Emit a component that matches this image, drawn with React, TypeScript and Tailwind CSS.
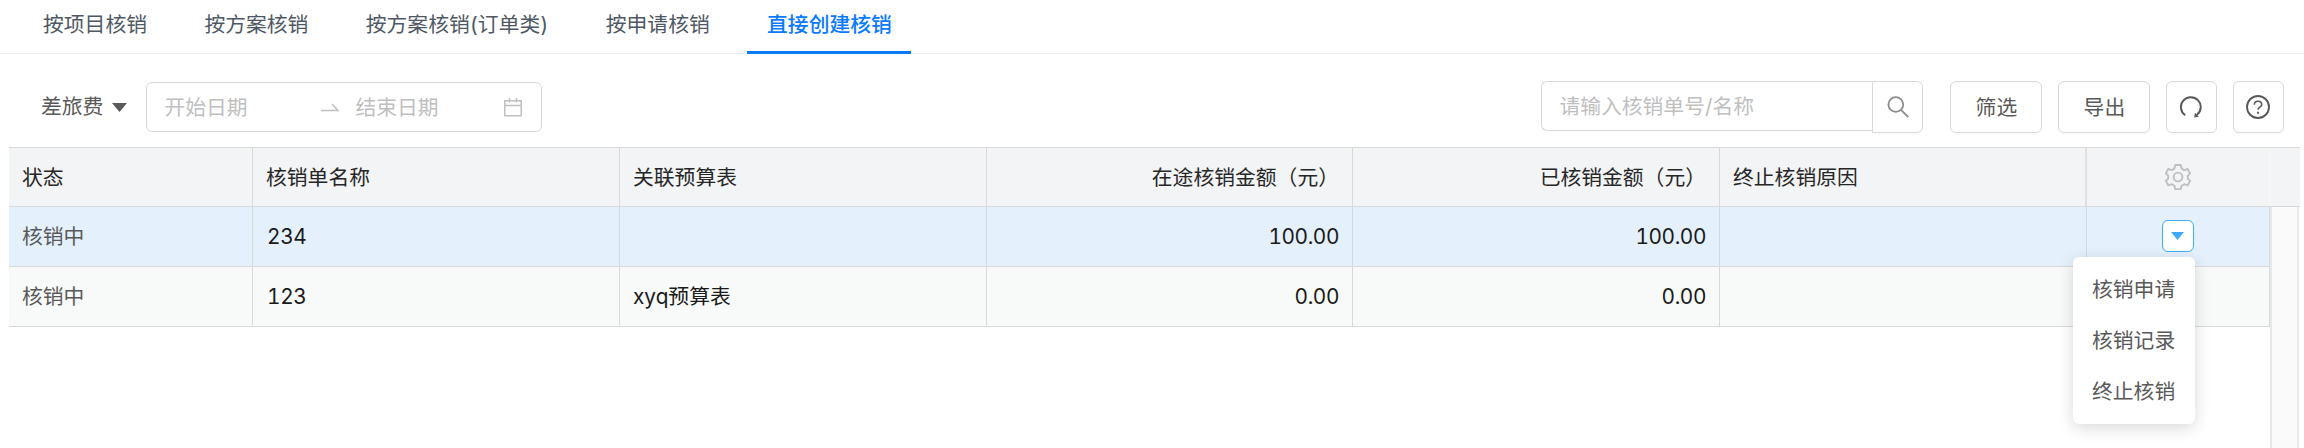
import React from "react";

const tabs = ["按项目核销", "按方案核销", "按方案核销(订单类)", "按申请核销"];
const columns = [
  { title: "核销单名称", right: false },
  { title: "关联预算表", right: false },
  { title: "在途核销金额（元）", right: true },
  { title: "已核销金额（元）", right: true },
  { title: "终止核销原因", right: false },
];
const rows = [
  ["234", "", "100.00", "100.00", ""],
  ["123", "xyq预算表", "0.00", "0.00", ""],
];
const grid = "grid grid-cols-[244px_367px_367px_366px_367px_367px_183px]";
const button =
  "flex h-[52px] items-center justify-center rounded-md border border-[#d9d9d9] bg-white text-[#595959] shadow-[0_2px_0_rgba(0,0,0,0.02)]";

function Calendar() {
  return (
    <svg width="18" height="19" viewBox="0 0 18 19" fill="none" stroke="#bfbfbf" strokeWidth="1.5">
      <path d="M.8 2.8h16.4v15H.8zM.8 7.5h16.4M5.5 0v4.5M12.5 0v4.5" />
    </svg>
  );
}

function Search() {
  return (
    <svg width="22" height="22" viewBox="0 0 22 22" fill="none" stroke="#8c8c8c" strokeWidth="1.8">
      <circle cx="8.8" cy="8.5" r="7.4" />
      <path d="M14 13.8l7.2 7.2" />
    </svg>
  );
}

function Reload() {
  return (
    <svg className="mr-[2px]" width="22" height="22" viewBox="0 0 22 22" fill="none" stroke="#595959" strokeWidth="2">
      <path d="M5.2 19.2A9.9 9.9 0 1 1 17 18.8" />
      <path d="M15 16.8l4 3.9-4.8 .8z" fill="#595959" stroke="none" />
    </svg>
  );
}

function Help() {
  return (
    <svg className="mr-[2px] mb-px" width="24" height="24" viewBox="0 0 24 24" fill="none" stroke="#595959" strokeWidth="1.9">
      <circle cx="12" cy="12" r="11" />
      <path d="M8.3 9.8c0-4.8 7.4-4.8 7.4 0 0 2.5-3.7 2.3-3.7 5" strokeWidth="1.6" />
      <path d="M12 16.7v2" />
    </svg>
  );
}

function Gear() {
  return (
    <svg width="26" height="26" viewBox="0 0 26 26" fill="none" stroke="#bfbfbf" strokeWidth="1.9" strokeLinejoin="round">
      <path d="M10.3 1h5.4l.9 3.6 2.6 1.5 3.5-1.1 2.4 4.4-2.3 2.3v2.9l2.3 2.3-2.4 4.4-3.5-1.1-2.6 1.5-.9 3.5h-5.4l-.9-3.5-2.6-1.5-3.5 1.1-2.4-4.4 2.3-2.3v-2.9L.9 9.4l2.4-4.4 3.5 1.1 2.6-1.5z" />
      <circle cx="13" cy="13" r="4.4" />
    </svg>
  );
}

export default function App() {
  return (
    <div className="relative flex h-[448px] w-[2304px] flex-col overflow-hidden bg-white font-['Inter','Noto_Sans_CJK_SC',sans-serif] text-[20.8px] leading-[32px] text-[#262626] tabular-nums">
      <nav className="flex h-[54px] shrink-0 border-b border-[#f0f0f0] pl-[43px] text-[#4e5864]">
        {tabs.map((t) => (
          <div key={t} className="mr-[57.4px] pt-[9px] whitespace-nowrap">{t}</div>
        ))}
        <div className="-mb-px -ml-[19.7px] h-[54px] w-[164px] border-b-[3px] border-[#0a7aff] pt-[9px] text-center font-medium text-[#0a7aff]">
          直接创建核销
        </div>
      </nav>

      <div className="flex h-[93px] shrink-0 items-start pt-[27px] pl-[41px]">
        <div className="flex h-[52px] items-center text-[#595959]">
          差旅费
          <svg className="ml-[9px]" width="15" height="9" viewBox="0 0 15 9">
            <path d="M0 0h15L7.5 9z" fill="#595959" />
          </svg>
        </div>
        <div className="mt-px ml-[19px] flex h-[50px] w-[396px] items-center rounded-md border border-[#d9d9d9] pr-[19px] pl-[17px] text-[#bfbfbf]">
          <span className="w-[157px] pt-px">开始日期</span>
          <svg className="mr-[16px]" width="18" height="9" viewBox="0 0 18 9" fill="none" stroke="#bfbfbf" strokeWidth="1.5">
            <path d="M0 7.5h17L11 1" />
          </svg>
          <span className="flex-1 pt-px">结束日期</span>
          <Calendar />
        </div>
        <div className="ml-[999px] flex">
          <div className="flex h-[50px] w-[331px] items-center rounded-l-md border border-r-0 border-[#d9d9d9] pt-px pl-[17px] text-[#bfbfbf]">
            请输入核销单号/名称
          </div>
          <button className={button + " w-[51px] rounded-l-none"}><Search /></button>
        </div>
        <button className={button + " ml-[27px] w-[92px] pt-[2px]"}>筛选</button>
        <button className={button + " ml-[16px] w-[92px] pt-[2px]"}>导出</button>
        <button className={button + " ml-[16px] w-[51px]"}><Reload /></button>
        <button className={button + " ml-[16px] w-[51px]"}><Help /></button>
      </div>

      <div className="flex flex-1 pl-[9px]">
        <div className="flex w-[2291px] flex-col border-t border-[#d9d9d9]">
          <div className={grid + " h-[59px] shrink-0 border-b border-[#d9d9d9] bg-[#f3f4f6]"}>
            <div className="flex items-center border-r border-[#d9d9d9] pt-[2px] pl-[13px]">状态</div>
            {columns.map((c, i) => (
              <div key={c.title} className={"flex items-center px-[13px] pt-[2px] " + (i === 4 ? "border-r-2 border-[#e0e0e1] " : "border-r border-[#d9d9d9] ") + (c.right ? "justify-end" : "")}>
                {c.title}
              </div>
            ))}
            <div className="flex items-center justify-center border-r border-[#f8f8f9] pr-px"><Gear /></div>
          </div>
          <div className="flex flex-1">
            <div className="w-[2261px]">
              {rows.map((r, i) => (
                <div key={i} className={grid + " h-[60px] border-b border-[#d9d9d9] " + (i === 0 ? "bg-[#e4f1fd]" : "bg-[#f8faf9]")}>
                  <div className="flex items-center border-r border-[#d9d9d9] pt-px pl-[13px] text-[#595959]">核销中</div>
                  {r.map((v, j) => (
                    <div key={j} className={"flex items-center border-r border-[#d9d9d9] px-[13px] pt-px text-[#1a1a1a] " + (columns[j].right ? "justify-end tracking-[-0.4px]" : j === 0 ? "pl-[14px] tracking-[-0.3px]" : "")}>
                      {v}
                    </div>
                  ))}
                  <div className="flex items-center justify-center border-r border-[#d9d9d9] pb-px">
                    {i === 0 && (
                      <button className="flex h-[32px] w-[32px] items-center justify-center rounded-md border border-[#40a9ff] bg-white pr-px pb-px">
                        <svg width="13" height="8" viewBox="0 0 13 8"><path d="M0 0h13L6.5 8z" fill="#40a9ff" /></svg>
                      </button>
                    )}
                  </div>
                </div>
              ))}
            </div>
            <div className="w-[29px] border-x-2 border-[#e8e8e8] bg-[#fafafa]" />
          </div>
        </div>
      </div>

      <div className="absolute top-[257px] left-[2073px] h-[167px] w-[122px] rounded-md bg-white pt-[7px] text-[#595959] shadow-[0_4px_16px_rgba(0,0,0,0.15)]">
        {["核销申请", "核销记录", "终止核销"].map((m) => (
          <div key={m} className="flex h-[51px] items-center pl-[19px]">{m}</div>
        ))}
      </div>
    </div>
  );
}
